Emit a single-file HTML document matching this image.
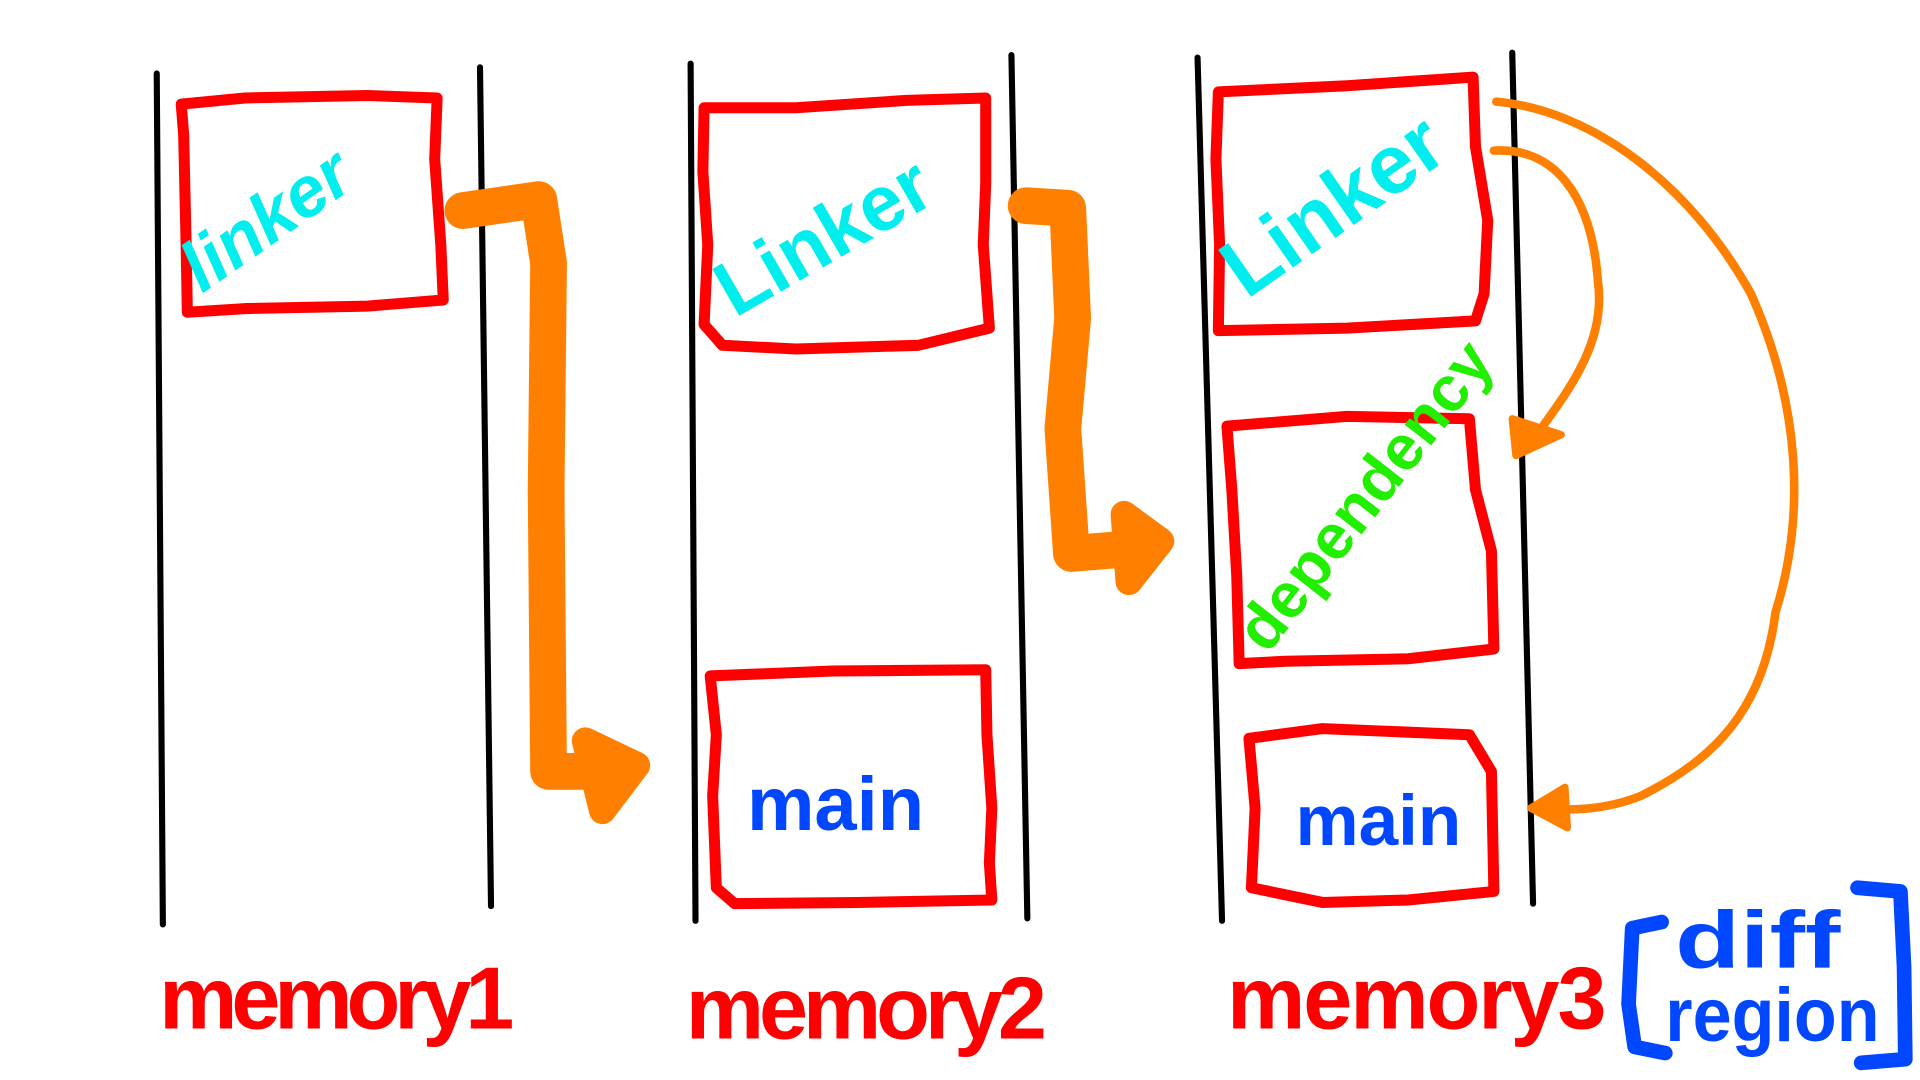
<!DOCTYPE html>
<html><head><meta charset="utf-8"><style>
html,body{margin:0;padding:0;background:#fff;width:1920px;height:1080px;overflow:hidden}
svg{display:block}
text{font-family:"Liberation Sans",sans-serif;font-weight:bold}
</style></head><body>
<svg width="1920" height="1080" viewBox="0 0 1568 882" preserveAspectRatio="none" xmlns="http://www.w3.org/2000/svg">
<g stroke="#000" stroke-width="5" fill="none" stroke-linecap="round">
<line x1="128" y1="60" x2="133" y2="755"/><line x1="392" y1="55" x2="401" y2="740"/>
<line x1="564" y1="52" x2="568" y2="752"/><line x1="826" y1="45" x2="839" y2="750"/>
<line x1="978" y1="47" x2="998" y2="752"/><line x1="1235" y1="43" x2="1252" y2="738"/>
</g>
<g stroke="#ff0000" stroke-width="9" fill="none" stroke-linejoin="round" stroke-linecap="round">
<path d="M148,85 L200,80 L300,78 L357,80 L355,130 L360,200 L362,245 L300,250 L200,252 L153,255 L152,200 L150,110 Z"/>
<path d="M575,88 L650,88 L740,82 L805,80 L805,150 L803,200 L808,268 L750,282 L650,285 L590,282 L575,265 L578,200 L574,140 Z"/>
<path d="M580,552 L680,548 L805,547 L806,600 L810,660 L808,705 L810,735 L700,737 L600,738 L585,725 L582,650 L585,600 Z"/>
<path d="M995,75 L1100,70 L1203,63 L1205,120 L1215,180 L1212,240 L1205,262 L1100,268 L995,270 L996,200 L993,130 Z"/>
<path d="M1002,348 L1100,340 L1200,342 L1205,400 L1218,450 L1220,530 L1150,538 L1050,540 L1012,542 L1010,470 L1006,400 Z"/>
<path d="M1020,603 L1080,595 L1200,600 L1218,630 L1220,728 L1150,735 L1080,737 L1022,725 L1025,660 Z"/>
</g>
<g stroke="#ff8000" fill="none" stroke-linecap="round" stroke-linejoin="round">
<path d="M378,172 L440,163 L448,215 L446,400 L448,630 L490,630" stroke-width="30"/>
<path d="M478,605 L520,625 L492,662 Z" stroke-width="22" fill="#ff8000"/>
<path d="M838,168 L872,170 L876,260 L868,350 L875,452 L925,448" stroke-width="30"/>
<path d="M918,420 L948,442 L922,475 Z" stroke-width="22" fill="#ff8000"/>
<path d="M1220,123 C1270,120 1300,160 1305,230 C1312,280 1280,320 1255,355" stroke-width="7"/>
<path d="M1235,342 L1275,355 L1238,372 Z" stroke-width="6" fill="#ff8000"/>
<path d="M1222,83 C1300,90 1380,150 1430,240 C1470,330 1475,420 1450,500 C1440,580 1400,620 1340,650 C1310,662 1280,662 1262,660" stroke-width="7"/>
<path d="M1250,660 L1278,643 L1280,676 Z" stroke-width="6" fill="#ff8000"/>
</g>
<g fill="#00eeee">
<text x="0" y="0" font-size="58" transform="translate(165,240) rotate(-35)" font-style="italic" font-weight="normal">linker</text>
<text x="0" y="0" font-size="64" transform="translate(600,260) rotate(-30)" font-weight="normal">Linker</text>
<text x="0" y="0" font-size="68" transform="translate(1018,245) rotate(-35)" font-weight="normal">Linker</text>
</g>
<text x="0" y="0" font-size="52" fill="#22ee00" transform="translate(1035,535) rotate(-52)" font-weight="normal">dependency</text>
<g fill="#0047ff">
<text x="610" y="678" font-size="62">main</text>
<text x="1058" y="690" font-size="58">main</text>
</g>
<g fill="#ff0000" font-size="72">
<text x="130" y="840" textLength="290">memory1</text>
<text x="560" y="848" textLength="295">memory2</text>
<text x="1002" y="840" textLength="310">memory3</text>
</g>
<g stroke="#0047ff" stroke-width="12" fill="none" stroke-linecap="round" stroke-linejoin="round">
<path d="M1357,753 L1333,758 L1330,820 L1335,855 L1360,860"/>
<path d="M1517,725 L1552,728 L1555,790 L1556,865 L1520,868"/>
</g>
<g fill="#0047ff">
<text x="1368" y="790" font-size="66" textLength="135" lengthAdjust="spacingAndGlyphs">diff</text>
<text x="1360" y="850" font-size="62" textLength="175" lengthAdjust="spacingAndGlyphs">region</text>
</g>
</svg>
</body></html>
